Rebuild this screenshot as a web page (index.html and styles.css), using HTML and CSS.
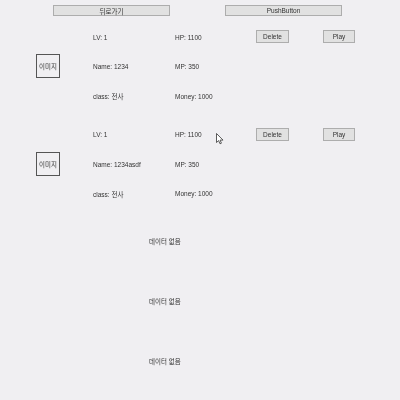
FILE: index.html
```html
<!DOCTYPE html>
<html lang="ko">
<head>
  <meta charset="UTF-8">
  <meta name="viewport" content="width=device-width, initial-scale=1.0">
  <title>캐릭터 선택</title>
  <link rel="stylesheet" href="styles.css">
</head>
<body>
  <div class="top-bar">
    <button class="btn btn-wide">뒤로가기</button>
    <button class="btn btn-wide">PushButton</button>
  </div>

  <div class="slot">
    <div class="portrait">이미지</div>
    <div class="stat left">LV: 1</div>
    <div class="stat right">HP: 1100</div>
    <div class="cell"><button class="btn btn-small">Delete</button></div>
    <div class="cell"><button class="btn btn-small">Play</button></div>
    <div class="stat left">Name: 1234</div>
    <div class="stat right">MP: 350</div>
    <div class="stat left">class: 전사</div>
    <div class="stat right">Money: 1000</div>
  </div>

  <div class="slot">
    <div class="portrait">이미지</div>
    <div class="stat left">LV: 1</div>
    <div class="stat right">HP: 1100</div>
    <div class="cell"><button class="btn btn-small">Delete</button></div>
    <div class="cell"><button class="btn btn-small">Play</button></div>
    <div class="stat left">Name: 1234asdf</div>
    <div class="stat right">MP: 350</div>
    <div class="stat left">class: 전사</div>
    <div class="stat right">Money: 1000</div>
  </div>

  <div class="empty-list">
    <div class="empty">데이터 없음</div>
    <div class="empty">데이터 없음</div>
    <div class="empty">데이터 없음</div>
  </div>

  <!-- 마우스 커서 -->
  <svg class="cursor" width="8" height="12" viewBox="0 0 8 12">
    <path d="M0.5 0.5 L0.5 9.5 L2.6 7.6 L4 10.8 L5.4 10.2 L4.1 7.1 L7 7.1 Z" fill="#fff" stroke="#333" stroke-width="0.8"/>
  </svg>
</body>
</html>
```

FILE: styles.css
```css
body {
  margin: 0;
  width: 400px;
  height: 400px;
  background-color: #f0eff2;
  font-family: "Liberation Sans", "Noto Sans CJK KR", sans-serif;
  font-size: 6.5px;
  color: #333;
  position: relative;
  overflow: hidden;
}
.top-bar {
  display: flex;
  gap: 55px;
  padding: 5px 0 0 53px;
}
.btn {
  font-family: inherit;
  font-size: 6.5px;
  color: #333;
  background-color: #e1e1e1;
  border: 1px solid #adadad;
  padding: 0;
  margin: 0;
  filter: grayscale(1);
}
.btn-wide {
  width: 117px;
  height: 11px;
}
.btn-small {
  width: 33px;
  height: 13px;
}
.slot {
  display: grid;
  grid-template-columns: 57px 82px 81px 67px 32px;
  grid-template-rows: repeat(3, 29.5px);
  padding-left: 36px;
  margin-top: 6.5px;
  margin-bottom: 9px;
}
.slot + .slot {
  margin-top: 0;
}
.portrait {
  grid-row: 1 / 4;
  grid-column: 1;
  width: 22px;
  height: 22px;
  border: 1px solid #555;
  align-self: center;
  margin-top: -1px;
  display: flex;
  align-items: center;
  justify-content: center;
  filter: grayscale(1);
}
.stat {
  display: flex;
  align-items: center;
  filter: grayscale(1);
}
.left {
  grid-column: 2;
}
.right {
  grid-column: 3;
}
.cell {
  display: flex;
  align-items: center;
  margin-top: -1px;
}
.empty-list {
  margin-top: -5.5px;
}
.empty {
  height: 60px;
  line-height: 60px;
  padding-left: 149px;
  filter: grayscale(1);
}
.cursor {
  position: absolute;
  left: 216px;
  top: 133px;
}
```
